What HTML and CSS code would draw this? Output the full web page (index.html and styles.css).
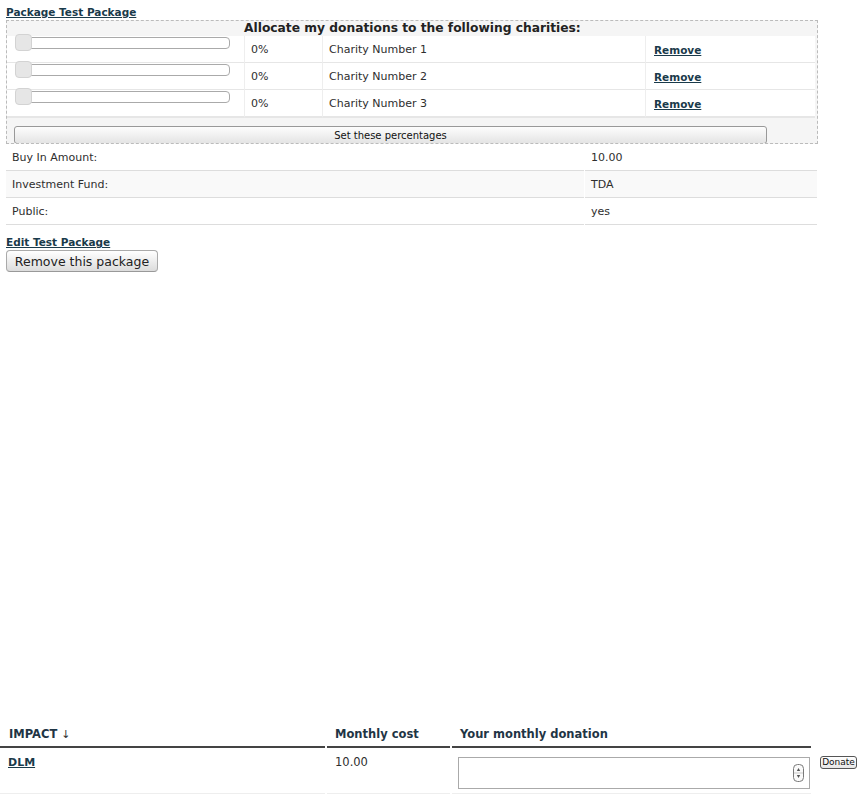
FILE: index.html
```html
<!DOCTYPE html>
<html>
<head>
<meta charset="utf-8">
<title>Package Test Package</title>
<link rel="stylesheet" href="styles.css">
</head>
<body>
<div class="pkg">
  <a class="pkg-title" href="#">Package Test Package</a>
  <div class="alloc">
    <div class="alloc-head">Allocate my donations to the following charities:</div>
    <div class="alloc-row">
      <div class="cell slider-cell"><div class="track"><span class="thumb"></span></div></div>
      <div class="cell txt">0%</div>
      <div class="cell txt">Charity Number 1</div>
      <div class="cell txt rm"><a href="#">Remove</a></div>
    </div>
    <div class="alloc-row">
      <div class="cell slider-cell"><div class="track"><span class="thumb"></span></div></div>
      <div class="cell txt">0%</div>
      <div class="cell txt">Charity Number 2</div>
      <div class="cell txt rm"><a href="#">Remove</a></div>
    </div>
    <div class="alloc-row">
      <div class="cell slider-cell"><div class="track"><span class="thumb"></span></div></div>
      <div class="cell txt">0%</div>
      <div class="cell txt">Charity Number 3</div>
      <div class="cell txt rm"><a href="#">Remove</a></div>
    </div>
    <div class="alloc-foot"><button class="set-btn">Set these percentages</button></div>
  </div>
  <div class="info">
    <div class="icell">Buy In Amount:</div><div class="icell">10.00</div>
    <div class="icell alt">Investment Fund:</div><div class="icell alt">TDA</div>
    <div class="icell">Public:</div><div class="icell">yes</div>
  </div>
  <a class="edit" href="#">Edit Test Package</a>
  <button class="remove-pkg">Remove this package</button>
</div>

<div class="impact">
  <div class="th"><a class="th-link" href="#">IMPACT</a> <span class="arrow">↓</span></div>
  <div class="th">Monthly cost</div>
  <div class="th">Your monthly donation</div>
  <div class="th blank"></div>

  <div class="td"><a href="#">DLM</a></div>
  <div class="td">10.00</div>
  <div class="td inp-cell">
    <div class="inp-wrap">
      <input class="amount" type="text" value="">
      <svg class="stepper" width="11" height="18" viewBox="0 0 11 18">
        <rect x="0.5" y="0.5" width="10" height="17" rx="4" ry="4" fill="#fafafa" stroke="#7a7a7a"/>
        <line x1="1" y1="9" x2="10" y2="9" stroke="#c8c8c8"/>
        <polygon points="5.5,4 3.8,7 7.2,7" fill="#555"/>
        <polygon points="5.5,14 3.8,11 7.2,11" fill="#555"/>
      </svg>
    </div>
  </div>
  <div class="td btn-cell"><button class="donate">Donate</button></div>
</div>
</body>
</html>
```

FILE: styles.css
```css
* { box-sizing: border-box; }

body {
  margin: 0;
  background: #fff;
  color: #2e2e2e;
  font-family: "DejaVu Sans", Verdana, sans-serif;
  font-size: 11px;
}

a {
  color: #1a3a4a;
  font-weight: bold;
  text-decoration: underline;
}

.pkg {
  padding: 5px 0 0 6px;
}

.pkg-title {
  display: block;
  width: max-content;
  font-size: 10.5px;
  line-height: 15px;
}

.alloc {
  width: 812px;
  height: 124px;
  border: 1px dashed #bbb;
  background: #f5f5f5;
}

.alloc-head {
  height: 15px;
  padding-left: 237px;
  font-size: 12.25px;
  font-weight: bold;
  line-height: 15px;
  color: #222;
  white-space: nowrap;
}

.alloc-row {
  display: grid;
  grid-template-columns: 237px 78px 323px 170px;
  height: 27px;
}

.cell {
  background: #fff;
  border-bottom: 2px solid #e6e6e6;
}

.txt {
  border-left: 1px solid #eee;
  padding: 3px 0 0 6px;
  line-height: 22px;
  white-space: nowrap;
}

.rm {
  padding-left: 8px;
}

.rm a {
  font-size: 10.5px;
}

.slider-cell {
  padding: 1px 0 0 8px;
}

.track {
  position: relative;
  width: 215px;
  height: 12px;
  border: 1px solid #aaa;
  border-radius: 4px;
  background: #fff;
}

.thumb {
  position: absolute;
  left: -1px;
  top: -4px;
  width: 17px;
  height: 17px;
  border: 1px solid #d3d3d3;
  border-radius: 4px;
  background: #e6e6e6;
}

.alloc-foot {
  height: 26px;
  padding: 9px 0 0 7px;
  overflow: hidden;
}

.set-btn {
  display: block;
  width: 753px;
  height: 18px;
  margin: 0;
  padding: 0;
  border: 1px solid #999;
  border-radius: 3px;
  background: linear-gradient(#fdfdfd, #e4e4e4);
  font-family: "DejaVu Sans", Verdana, sans-serif;
  font-size: 10px;
  line-height: 15px;
  color: #111;
}

.info {
  display: grid;
  grid-template-columns: 578px 232px;
  column-gap: 1px;
  width: 811px;
}

.icell {
  height: 27px;
  padding: 2px 0 0 6px;
  line-height: 24px;
  border-bottom: 1px solid #ddd;
}

.icell.alt {
  background: #f9f9f9;
}

.edit {
  display: block;
  width: max-content;
  margin-top: 10px;
  font-size: 10.5px;
  line-height: 14px;
}

.remove-pkg {
  display: block;
  width: 152px;
  height: 22px;
  margin: 1px 0 0 0;
  padding: 0;
  border: 1px solid #aaa;
  border-bottom-color: #999;
  border-radius: 4px;
  background: linear-gradient(#ffffff, #dcdcdc);
  font-family: "DejaVu Sans", Verdana, sans-serif;
  font-size: 12.5px;
  color: #222;
}

.impact {
  display: grid;
  grid-template-columns: 325px 123px 359px 51px;
  column-gap: 2px;
  margin-top: 450px;
}

.th {
  height: 26px;
  padding-left: 8px;
  border-bottom: 2px solid #444;
  font-size: 11.5px;
  font-weight: bold;
  line-height: 24px;
  color: #1f3545;
  white-space: nowrap;
}

.th:first-child {
  padding-left: 9px;
}

.th-link {
  color: #1f3545;
  text-decoration: none;
}

.arrow {
  font-weight: normal;
  font-size: 11px;
  color: #333;
}

.th.blank {
  border-bottom: none;
}

.td {
  height: 46px;
  padding: 7px 0 0 8px;
  line-height: 14px;
  font-size: 11.5px;
  border-bottom: 1px solid #eee;
}

.td a {
  font-size: 11px;
}

.inp-cell {
  padding: 9px 0 0 6px;
}

.inp-wrap {
  position: relative;
  width: 352px;
  height: 32px;
}

.amount {
  display: block;
  width: 352px;
  height: 32px;
  margin: 0;
  border: 1px solid #aaa;
  background: #fff;
}

.stepper {
  position: absolute;
  right: 6px;
  top: 7px;
}

.btn-cell {
  padding: 8px 0 0 7px;
  border-bottom: none;
}

.donate {
  display: block;
  width: 37px;
  height: 13px;
  margin: 0;
  padding: 0;
  border: 1px solid #555;
  border-radius: 3px;
  background: linear-gradient(#ffffff, #e6e6e6);
  font-family: "DejaVu Sans", Verdana, sans-serif;
  font-size: 9px;
  line-height: 11px;
  color: #111;
}
```
